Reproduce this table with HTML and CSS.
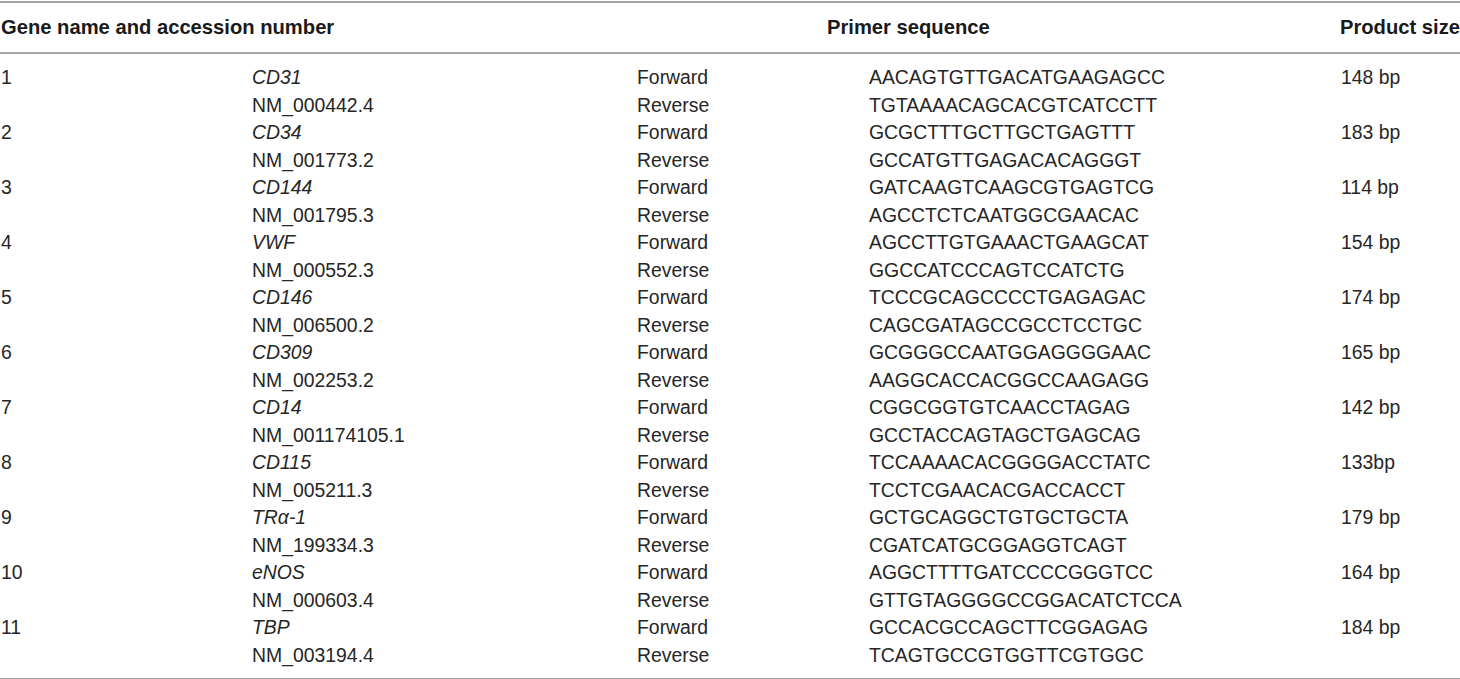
FILE: index.html
```html
<!DOCTYPE html>
<html>
<head>
<meta charset="utf-8">
<link rel="stylesheet" href="styles.css">
</head>
<body>
<div class="table">
  <div class="head">
    <div class="h-gene">Gene name and accession number</div>
    <div class="h-primer">Primer sequence</div>
    <div class="h-size">Product size</div>
  </div>
  <div class="body">
    <div>1</div><div class="it">CD31</div><div>Forward</div><div>AACAGTGTTGACATGAAGAGCC</div><div>148 bp</div>
    <div></div><div>NM_000442.4</div><div>Reverse</div><div>TGTAAAACAGCACGTCATCCTT</div><div></div>
    <div>2</div><div class="it">CD34</div><div>Forward</div><div>GCGCTTTGCTTGCTGAGTTT</div><div>183 bp</div>
    <div></div><div>NM_001773.2</div><div>Reverse</div><div>GCCATGTTGAGACACAGGGT</div><div></div>
    <div>3</div><div class="it">CD144</div><div>Forward</div><div>GATCAAGTCAAGCGTGAGTCG</div><div>114 bp</div>
    <div></div><div>NM_001795.3</div><div>Reverse</div><div>AGCCTCTCAATGGCGAACAC</div><div></div>
    <div>4</div><div class="it">VWF</div><div>Forward</div><div>AGCCTTGTGAAACTGAAGCAT</div><div>154 bp</div>
    <div></div><div>NM_000552.3</div><div>Reverse</div><div>GGCCATCCCAGTCCATCTG</div><div></div>
    <div>5</div><div class="it">CD146</div><div>Forward</div><div>TCCCGCAGCCCCTGAGAGAC</div><div>174 bp</div>
    <div></div><div>NM_006500.2</div><div>Reverse</div><div>CAGCGATAGCCGCCTCCTGC</div><div></div>
    <div>6</div><div class="it">CD309</div><div>Forward</div><div>GCGGGCCAATGGAGGGGAAC</div><div>165 bp</div>
    <div></div><div>NM_002253.2</div><div>Reverse</div><div>AAGGCACCACGGCCAAGAGG</div><div></div>
    <div>7</div><div class="it">CD14</div><div>Forward</div><div>CGGCGGTGTCAACCTAGAG</div><div>142 bp</div>
    <div></div><div>NM_001174105.1</div><div>Reverse</div><div>GCCTACCAGTAGCTGAGCAG</div><div></div>
    <div>8</div><div class="it">CD115</div><div>Forward</div><div>TCCAAAACACGGGGACCTATC</div><div>133bp</div>
    <div></div><div>NM_005211.3</div><div>Reverse</div><div>TCCTCGAACACGACCACCT</div><div></div>
    <div>9</div><div class="it">TRα-1</div><div>Forward</div><div>GCTGCAGGCTGTGCTGCTA</div><div>179 bp</div>
    <div></div><div>NM_199334.3</div><div>Reverse</div><div>CGATCATGCGGAGGTCAGT</div><div></div>
    <div>10</div><div class="it">eNOS</div><div>Forward</div><div>AGGCTTTTGATCCCCGGGTCC</div><div>164 bp</div>
    <div></div><div>NM_000603.4</div><div>Reverse</div><div>GTTGTAGGGGCCGGACATCTCCA</div><div></div>
    <div>11</div><div class="it">TBP</div><div>Forward</div><div>GCCACGCCAGCTTCGGAGAG</div><div>184 bp</div>
    <div></div><div>NM_003194.4</div><div>Reverse</div><div>TCAGTGCCGTGGTTCGTGGC</div><div></div>
  </div>
</div>
</body>
</html>
```

FILE: styles.css
```css
html, body {
  margin: 0;
  padding: 0;
  background: #ffffff;
}
body {
  font-family: "Liberation Sans", Arial, sans-serif;
  color: #262626;
  width: 1460px;
  overflow: hidden;
}
.table {
  border-top: 2px solid #a3a3a3;
  border-bottom: 2px solid #a3a3a3;
  margin-top: 1px;
}
.head {
  display: flex;
  align-items: center;
  height: 49px;
  border-bottom: 2px solid #a8a8a8;
  font-weight: bold;
  font-size: 20.2px;
  color: #1a1a1a;
}
.h-gene {
  width: 827px;
  padding-left: 1px;
  box-sizing: border-box;
}
.h-primer {
  width: 513px;
}
.h-size {
  white-space: nowrap;
}
.body {
  display: grid;
  grid-template-columns: 251px 385px 232px 472px 120px;
  grid-auto-rows: 27.5px;
  align-items: center;
  padding: 10px 0 9px 0;
  font-size: 19.4px;
}
.body > div {
  white-space: nowrap;
  padding-left: 1px;
}
.it {
  font-style: italic;
}
```
